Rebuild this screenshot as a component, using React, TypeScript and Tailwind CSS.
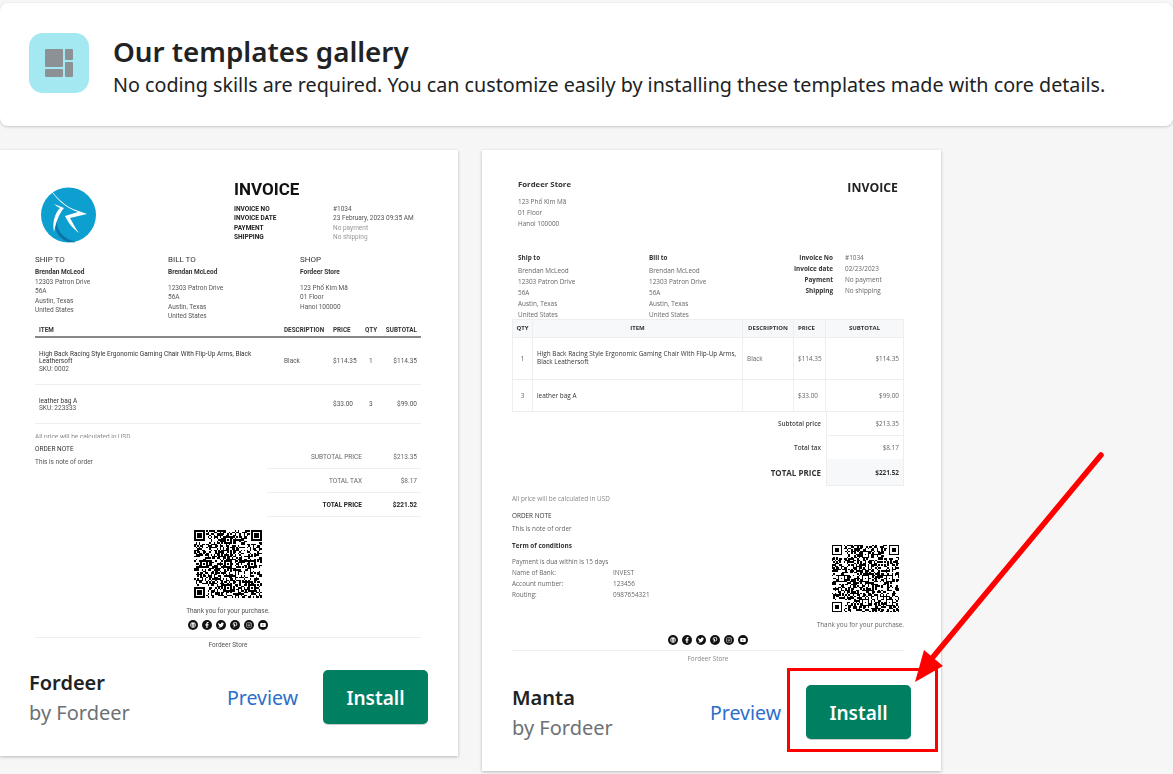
import { FaFacebookF, FaGlobe, FaInstagram, FaPinterestP, FaTwitter, FaYoutube } from "react-icons/fa";

const SOCIALS = [FaGlobe, FaFacebookF, FaTwitter, FaPinterestP, FaInstagram, FaYoutube];

// pseudo random modules so the code looks like a real qr, it does not scan
function qrCells() {
  const size = 45;
  const cells: [number, number][] = [];
  let seed = 1034;
  const inFinder = (x: number, y: number) =>
    (x < 8 && y < 8) || (x >= size - 8 && y < 8) || (x < 8 && y >= size - 8);
  const align = [6, 22, 38];
  const inAlign = (x: number, y: number) =>
    align.some((a) => align.some((b) => Math.abs(x - a) <= 2 && Math.abs(y - b) <= 2));
  for (let y = 0; y < size; y++) {
    for (let x = 0; x < size; x++) {
      if (inFinder(x, y) || inAlign(x, y)) continue;
      seed = (seed * 1664525 + 1013904223) % 4294967296;
      if (seed / 4294967296 > 0.5) cells.push([x, y]);
    }
  }
  return { size, cells, align };
}

function QrCode({ className }: { className: string }) {
  const { size, cells, align } = qrCells();
  const finders = [
    [0, 0],
    [size - 7, 0],
    [0, size - 7],
  ];
  const aligns = align
    .flatMap((a) => align.map((b) => [a, b]))
    .filter(([a, b]) => !((a < 8 && b < 8) || (a > 36 && b < 8) || (a < 8 && b > 36)));
  return (
    <svg viewBox={`0 0 ${size} ${size}`} className={className} shapeRendering="crispEdges">
      {cells.map(([x, y]) => (
        <rect key={`${x}-${y}`} x={x} y={y} width="1" height="1" fill="#000" />
      ))}
      {finders.map(([x, y]) => (
        <g key={`f${x}-${y}`}>
          <rect x={x} y={y} width="7" height="7" fill="#000" />
          <rect x={x + 1} y={y + 1} width="5" height="5" fill="#fff" />
          <rect x={x + 2} y={y + 2} width="3" height="3" fill="#000" />
        </g>
      ))}
      {aligns.map(([x, y]) => (
        <g key={`a${x}-${y}`}>
          <rect x={x - 2} y={y - 2} width="5" height="5" fill="#000" />
          <rect x={x - 1} y={y - 1} width="3" height="3" fill="#fff" />
          <rect x={x} y={y} width="1" height="1" fill="#000" />
        </g>
      ))}
    </svg>
  );
}

function Socials() {
  return (
    <div className="flex justify-center gap-[4px]">
      {SOCIALS.map((Icon, i) => (
        <span key={i} className="flex h-[10px] w-[10px] items-center justify-center rounded-full bg-[#111] text-[6px] text-white">
          <Icon />
        </span>
      ))}
    </div>
  );
}

function Logo() {
  return (
    <svg viewBox="0 0 70 70" className="h-[70px] w-[70px]">
      <circle cx="33.5" cy="35" r="27.5" fill="#0e9fd1" />
      <path d="M22 40C21 50 28 59 41 62C30 64 20 56 20 44Z" fill="#0b76a6" />
      <path d="M13 5C18 14 27 24 38 29L52 34L35 38C38 43 40 48 44 53C37 48 33 42 30 36L43 32C31 28 19 18 13 5Z" fill="#fff" />
      <path d="M19 24L29 28C24 34 21 42 19 52C17 42 20 33 25 28C23 27 21 26 19 24Z" fill="#fff" />
    </svg>
  );
}

function FordeerInvoice() {
  const meta = [
    ["INVOICE NO", "#1034", "text-[#555]"],
    ["INVOICE DATE", "23 February, 2023 09:35 AM", "text-[#555]"],
    ["PAYMENT", "No payment", "text-[#999]"],
    ["SHIPPING", "No shipping", "text-[#999]"],
  ];
  return (
    <div className="ml-[35px] mr-[37px] font-['Roboto',sans-serif] text-[6.5px] leading-[9.5px] text-[#555] blur-[0.3px]">
      <div className="flex h-[103px]">
        <div className="mt-[30px] w-[199px]">
          <Logo />
        </div>
        <div className="pt-[29px]">
          <div className="text-[17px] font-bold leading-[20px] text-[#111]">INVOICE</div>
          <div className="mt-[5.5px]">
            {meta.map(([label, value, tone]) => (
              <div key={label} className="flex">
                <span className="w-[99px] font-bold text-[#222]">{label}</span>
                <span className={tone}>{value}</span>
              </div>
            ))}
          </div>
        </div>
      </div>

      <div className="grid h-[71.5px] grid-cols-[133px_132px_1fr] pt-[1px]">
        <div>
          <div className="text-[8px] leading-[12px] text-[#333]">SHIP TO</div>
          <div className="mt-[2px] font-bold text-[#333]">Brendan McLeod</div>
          <div>12303 Patron Drive</div>
          <div>56A</div>
          <div>Austin, Texas</div>
          <div>United States</div>
        </div>
        <div>
          <div className="text-[8px] leading-[12px] text-[#333]">BILL TO</div>
          <div className="mt-[2px] font-bold text-[#333]">Brendan McLeod</div>
          <div className="mt-[6px]">12303 Patron Drive</div>
          <div>56A</div>
          <div>Austin, Texas</div>
          <div>United States</div>
        </div>
        <div>
          <div className="text-[8px] leading-[12px] text-[#333]">SHOP</div>
          <div className="mt-[2px] font-bold text-[#333]">Fordeer Store</div>
          <div className="mt-[6px]">123 Phố Kim Mã</div>
          <div>01 Floor</div>
          <div>Hanoi 100000</div>
        </div>
      </div>

      <div className="flex h-[13.5px] items-start border-b-2 border-[#888] pl-[4px] pr-[4px] text-[6.3px] font-bold leading-[10px] text-[#333]">
        <span className="w-[245px]">ITEM</span>
        <span className="w-[49px]">DESCRIPTION</span>
        <span className="w-[32px]">PRICE</span>
        <span className="w-[20px]">QTY</span>
        <span className="flex-1 text-right">SUBTOTAL</span>
      </div>
      <div className="flex h-[47px] items-center border-b border-[#eee] px-[4px] pt-[2px] leading-[7.5px]">
        <div className="w-[245px] text-[#333]">
          <div className="w-[225px]">High Back Racing Style Ergonomic Gaming Chair With Flip-Up Arms, Black Leathersoft</div>
          <div className="text-[#555]">SKU: 0002</div>
        </div>
        <span className="w-[49px]">Black</span>
        <span className="w-[36px]">$114.35</span>
        <span className="w-[16px]">1</span>
        <span className="flex-1 text-right">$114.35</span>
      </div>
      <div className="flex h-[39px] items-center border-b border-[#eee] px-[4px] pt-[2px] leading-[7.5px]">
        <div className="w-[294px] text-[#333]">
          <div>leather bag A</div>
          <div className="text-[#555]">SKU: 223333</div>
        </div>
        <span className="w-[36px]">$33.00</span>
        <span className="w-[16px]">3</span>
        <span className="flex-1 text-right">$99.00</span>
      </div>

      <div className="mt-[9px] h-[5px] overflow-hidden leading-[8px] text-[#888]">All price will be calculated in USD</div>

      <div className="flex justify-between">
        <div className="mt-[6px] leading-[10px]">
          <div className="text-[#333]">ORDER NOTE</div>
          <div className="mt-[3px]">This is note of order</div>
        </div>
        <div className="mt-[7px] w-[154px] text-[#666]">
          <TotalRow label="SUBTOTAL PRICE" value="$213.35" />
          <TotalRow label="TOTAL TAX" value="$8.17" />
          <TotalRow label="TOTAL PRICE" value="$221.52" strong />
        </div>
      </div>

      <QrCode className="mx-auto mt-[13px] h-[68px] w-[68px]" />
      <div className="mt-[8px] text-center leading-[10px]">Thank you for your purchase.</div>
      <div className="mt-[4px]">
        <Socials />
      </div>
      <div className="mt-[7px] border-t border-[#eee]" />
      <div className="mt-[2px] text-center leading-[10px]">Fordeer Store</div>
    </div>
  );
}

function TotalRow({ label, value, strong }: { label: string; value: string; strong?: boolean }) {
  return (
    <div className={`flex h-[24px] items-center border-b border-[#eee] pr-[4px] pt-[2px] ${strong ? "font-bold text-[#222]" : ""}`}>
      <span className="w-[95px] text-right">{label}</span>
      <span className="flex-1 text-right">{value}</span>
    </div>
  );
}

function MantaInvoice() {
  const meta = [
    ["Invoice No", "#1034"],
    ["Invoice date", "02/23/2023"],
    ["Payment", "No payment"],
    ["Shipping", "No shipping"],
  ];
  const th = "flex items-center justify-center border-r border-[#eee] text-[6px] font-bold text-[#333]";
  const td = "flex items-center border-r border-t border-[#eee] px-[4px]";
  return (
    <div className="ml-[30px] mr-[37px] font-['Open_Sans',sans-serif] text-[6.4px] leading-[11px] text-[#666] blur-[0.3px]">
      <div className="flex h-[101.5px] justify-between pl-[6px] pr-[6px] pt-[28.5px]">
        <div>
          <div className="text-[7.8px] font-bold text-[#333]">Fordeer Store</div>
          <div className="mt-[6px]">123 Phố Kim Mã</div>
          <div>01 Floor</div>
          <div>Hanoi 100000</div>
        </div>
        <div className="text-[12.3px] font-bold leading-[17px] text-[#222]">INVOICE</div>
      </div>

      <div className="flex h-[67.5px] pl-[6px]">
        <div className="w-[131px]">
          <div className="mb-[2px] font-bold text-[#333]">Ship to</div>
          <div>Brendan McLeod</div>
          <div>12303 Patron Drive</div>
          <div>56A</div>
          <div>Austin, Texas</div>
          <div>United States</div>
        </div>
        <div className="w-[131px]">
          <div className="mb-[2px] font-bold text-[#333]">Bill to</div>
          <div>Brendan McLeod</div>
          <div>12303 Patron Drive</div>
          <div>56A</div>
          <div>Austin, Texas</div>
          <div>United States</div>
        </div>
        <div className="w-[118px]">
          {meta.map(([label, value]) => (
            <div key={label} className="flex">
              <span className="w-[53px] text-right font-bold text-[#333]">{label}</span>
              <span className="ml-[12px]">{value}</span>
            </div>
          ))}
        </div>
      </div>

      <div className="grid grid-cols-[20px_210px_51px_32px_78px] grid-rows-[17px_41.5px_32px] border-b border-l border-t border-[#eee]">
        <div className={`${th} bg-[#f6f8fa]`}>QTY</div>
        <div className={`${th} bg-[#f6f8fa]`}>ITEM</div>
        <div className={`${th} bg-[#f6f8fa]`}>DESCRIPTION</div>
        <div className={`${th} justify-start bg-[#f6f8fa] pl-[4px]`}>PRICE</div>
        <div className={`${th} bg-[#f6f8fa]`}>SUBTOTAL</div>

        <div className={`${td} justify-center`}>1</div>
        <div className={`${td} leading-[8.5px] text-[#333]`}>High Back Racing Style Ergonomic Gaming Chair With Flip-Up Arms, Black Leathersoft</div>
        <div className={td}>Black</div>
        <div className={td}>$114.35</div>
        <div className={`${td} justify-end`}>$114.35</div>

        <div className={`${td} justify-center`}>3</div>
        <div className={`${td} text-[#333]`}>leather bag A</div>
        <div className={td} />
        <div className={td}>$33.00</div>
        <div className={`${td} justify-end`}>$99.00</div>
      </div>

      <div className="ml-auto grid grid-cols-[83px_78px] justify-end">
        <div className="flex h-[24.5px] items-center justify-end pr-[5px] font-semibold text-[#444]">Subtotal price</div>
        <div className="flex items-center justify-end border-b border-l border-r border-[#eee] px-[4px]">$213.35</div>
        <div className="flex h-[23px] items-center justify-end pr-[5px] font-semibold text-[#444]">Total tax</div>
        <div className="flex items-center justify-end border-l border-r border-[#eee] px-[4px]">$8.17</div>
        <div className="flex h-[27px] items-center justify-end pr-[5px] text-[8px] font-bold text-[#333]">TOTAL PRICE</div>
        <div className="flex items-center justify-end border-b border-l border-r border-[#eee] bg-[#f6f8fa] px-[4px] font-bold text-[#333]">$221.52</div>
      </div>

      <div className="mt-[8px] leading-[10px] text-[#888]">All price will be calculated in USD</div>

      <div className="flex justify-between">
        <div className="mt-[7px]">
          <div className="leading-[10px] text-[#333]">ORDER NOTE</div>
          <div className="mt-[3px] leading-[10px]">This is note of order</div>
          <div className="mt-[6.5px] leading-[10px] font-bold text-[#333]">Term of conditions</div>
          <div className="mt-[5px]">Payment is dua within is 15 days</div>
          <div className="flex">
            <span className="w-[101px]">Name of Bank:</span>
            <span>INVEST</span>
          </div>
          <div className="flex">
            <span className="w-[101px]">Account number:</span>
            <span>123456</span>
          </div>
          <div className="flex">
            <span className="w-[101px]">Routing:</span>
            <span>0987654321</span>
          </div>
        </div>
        <div className="flex flex-col items-end pt-[41px]">
          <QrCode className="mr-[5px] h-[67px] w-[67px]" />
          <div className="mt-[8px] leading-[10px]">Thank you for your purchase.</div>
        </div>
      </div>

      <div className="mt-[5px]">
        <Socials />
      </div>
      <div className="mt-[5px] border-t border-[#eee]" />
      <div className="mt-[3px] text-center leading-[10px] text-[#888]">Fordeer Store</div>
    </div>
  );
}

function CardFooter({ name, className }: { name: string; className: string }) {
  return (
    <div className={`flex h-[54px] items-center justify-between pr-[30px] ${className}`}>
      <div className="pt-[2px] text-[20px] leading-[30px]">
        <div className="font-semibold text-[#202223]">{name}</div>
        <div className="text-[#6d7175]">by Fordeer</div>
      </div>
      <div className="flex items-center gap-[25px]">
        <a className="pt-[2px] text-[19.5px] text-[#2c6ecb]">Preview</a>
        <button className="h-[54px] w-[105px] rounded-[5px] bg-[#008060] pt-[2px] text-[19px] font-semibold text-white shadow-[0_1px_0_rgba(0,0,0,0.2)]">
          Install
        </button>
      </div>
    </div>
  );
}

export default function App() {
  return (
    <div className="relative h-[774px] w-[1173px] overflow-hidden bg-[#f6f6f7] pt-[3px] font-['Noto_Sans',sans-serif]">
      <header className="flex h-[123px] items-start gap-[24px] rounded-lg bg-white pl-[29px] pt-[30px] shadow-[0_1px_3px_rgba(0,0,0,0.2)]">
        <div className="flex h-[60px] w-[60px] items-center justify-center rounded-[14px] bg-[#a4e8f2]">
          <svg viewBox="0 0 28 28" className="h-[28px] w-[28px]" fill="#8c9196">
            <rect x="0" y="0" width="18" height="18" rx="1" />
            <rect x="20" y="0" width="8" height="11" rx="1" />
            <rect x="20" y="13" width="8" height="15" rx="1" />
            <rect x="0" y="20" width="18" height="8" rx="1" />
          </svg>
        </div>
        <div className="mt-[1.5px]">
          <h1 className="text-[27.75px] font-semibold leading-[33px] text-[#202223]">Our templates gallery</h1>
          <p className="mt-[3px] text-[19.72px] leading-[27px] text-[#202223]">
            No coding skills are required. You can customize easily by installing these templates made with core details.
          </p>
        </div>
      </header>

      <div className="mt-[24px] flex items-start gap-[24px]">
        <section className="w-[458px] bg-white pb-[32px] shadow-[0_1px_3px_rgba(0,0,0,0.25)]">
          <FordeerInvoice />
          <CardFooter name="Fordeer" className="mt-[20px] pl-[29px]" />
        </section>
        <section className="w-[459px] bg-white pb-[32px] shadow-[0_1px_3px_rgba(0,0,0,0.25)]">
          <MantaInvoice />
          <CardFooter name="Manta" className="mt-[21px] pl-[30px]" />
        </section>
      </div>

      {/* annotation drawn over the screenshot */}
      <div className="absolute left-[787px] top-[668px] h-[84px] w-[151px] border-[3px] border-[#ff0000]" />
      <svg className="absolute left-0 top-0 h-[774px] w-[1173px]" viewBox="0 0 1173 774" fill="none">
        <path d="M1101 455L933 657" stroke="#ff0000" strokeWidth="5.5" strokeLinecap="round" />
        <path d="M924 650L943 666L915 682Z" fill="#ff0000" />
      </svg>
    </div>
  );
}
